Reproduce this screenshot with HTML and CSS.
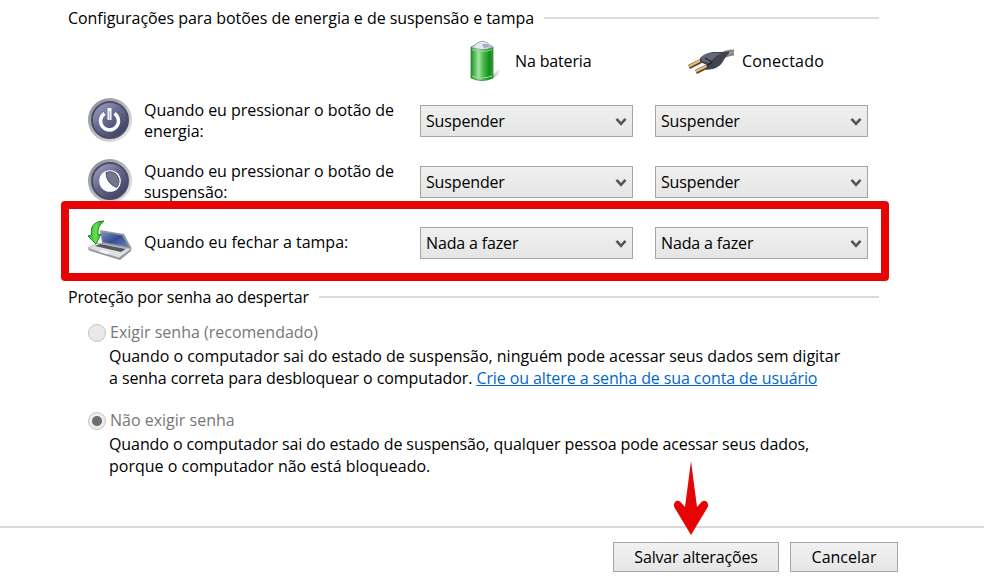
FILE: index.html
```
<!DOCTYPE html>
<html lang="pt-BR">
<head>
  <meta charset="UTF-8">
  <title>Opções de Energia</title>
  <link rel="stylesheet" href="styles.css">
</head>
<body>

  <main>
    <h2 class="titulo"><span class="t-config">Configurações para botões de energia e de suspensão e tampa</span></h2>

    <div class="colunas">
      <div class="coluna bateria">
        <svg width="34" height="44" viewBox="0 0 34 44">
          <defs>
            <linearGradient id="verde">
              <stop offset="0" stop-color="#278c2b"/>
              <stop offset=".2" stop-color="#62c568"/>
              <stop offset=".35" stop-color="#a5e5a6"/>
              <stop offset=".55" stop-color="#4fbb50"/>
              <stop offset=".85" stop-color="#128b18"/>
              <stop offset="1" stop-color="#37a53c"/>
            </linearGradient>
            <linearGradient id="sombra">
              <stop offset="0" stop-color="#999"/>
              <stop offset="1" stop-color="#fff"/>
            </linearGradient>
          </defs>
          <path d="M22 39 L32 29 Q34 35 24 40Z" fill="url(#sombra)"/>
          <path d="M3 8 Q8 6 10 4 Q14 1 19 4 Q21 6 25 8 V39 Q14 44 3 39Z" fill="url(#verde)" stroke="#288b2c" stroke-width=".8"/>
          <path d="M3.5 8 Q8 6 10 3.500 Q14 .5 19 3.500 Q21 6 25 8 Q14 13 3.5 8Z" fill="#e4e8f2" stroke="#8c99a6" stroke-width=".7"/>
          <path d="M14 5 l5 0 4 3 -7 1z" fill="#a6a9c8"/>
          <path d="M4 10.500 Q14 14.500 24 10.500M4 37 Q14 41 24 37" fill="none" stroke="#98df98"/>
        </svg>
        <span class="t-bateria">Na bateria</span>
      </div>
      <div class="coluna tomada">
        <svg width="48" height="26" viewBox="0 0 48 26">
          <path d="M31 8 Q37 3 46 3 M33 10 Q38 7 46 6" fill="none" stroke="#85868b" stroke-width="3"/>
          <path d="M1 19 L15 12 M8 24 L22 17" stroke="#68471f" stroke-width="4.2"/>
          <path d="M1 18.3 L15 11.3 M8 23.3 L22 16.3" stroke="#e4bf83" stroke-width="2.2"/>
          <path d="M12 10 Q17 5 25 4 L34 4 Q39 3 42 4 Q37 9 34 15 Q31 19 25 21 L18 22 L19 17 L12 14Z" fill="#41444f"/>
          <path d="M13 10 Q18 5 25 5 L33 5 L27 9 L21 15 L14 13Z" fill="#656875"/>
          <path d="M17 10 L24 14 L19 18" fill="none" stroke="#242733" stroke-width="1.4"/>
        </svg>
        <span class="t-conectado">Conectado</span>
      </div>
    </div>

    <div class="linhas">
      <div class="linha">
        <svg class="icone" width="46" height="46" viewBox="0 0 46 46">
          <defs>
            <linearGradient id="aro" x2="1" y2="1">
              <stop offset="0" stop-color="#85868c"/>
              <stop offset=".5" stop-color="#b9babd"/>
              <stop offset="1" stop-color="#f0f0f2"/>
            </linearGradient>
            <linearGradient id="botao" x2=".8" y2="1">
              <stop offset="0" stop-color="#a9abc9"/>
              <stop offset=".5" stop-color="#66688e"/>
              <stop offset="1" stop-color="#3c3e60"/>
            </linearGradient>
          </defs>
          <circle cx="23" cy="23" r="22" fill="url(#aro)"/>
          <circle cx="23" cy="23" r="18" fill="url(#botao)" stroke="#4b4d69" stroke-width="2"/>
          <path d="M17.5 16.5 A9 9 0 1 0 27.5 16.5" fill="none" stroke="#fff" stroke-width="3.4"/>
          <path d="M22.5 11 V23" stroke="#fff" stroke-width="4"/>
          <path d="M22.5 14 V23" stroke="#b8bacd" stroke-width="1.5"/>
        </svg>
        <label class="rotulo">Quando eu pressionar o botão de<br>energia:</label>
        <div class="combo"><select><option>Suspender</option></select><svg width="12" height="10" viewBox="0 0 12 10"><path d="M1.5 1.8 L6 6.8 L10.5 1.8"/></svg></div>
        <div class="combo"><select><option>Suspender</option></select><svg width="12" height="10" viewBox="0 0 12 10"><path d="M1.5 1.8 L6 6.8 L10.5 1.8"/></svg></div>
      </div>

      <div class="linha">
        <svg class="icone" width="46" height="46" viewBox="0 0 46 46">
          <circle cx="23" cy="23" r="22" fill="url(#aro)"/>
          <circle cx="23" cy="23" r="18" fill="url(#botao)" stroke="#4b4d69" stroke-width="2"/>
          <circle cx="23" cy="23" r="10.8" fill="#fff"/>
          <path d="M19 14.500 Q28 11.500 31.500 20 Q33 26 29.500 29.500 Q19 25 19 14.500Z" fill="#74768e" stroke="#4c4e67"/>
        </svg>
        <label class="rotulo">Quando eu pressionar o botão de<br>suspensão:</label>
        <div class="combo"><select><option>Suspender</option></select><svg width="12" height="10" viewBox="0 0 12 10"><path d="M1.5 1.8 L6 6.8 L10.5 1.8"/></svg></div>
        <div class="combo"><select><option>Suspender</option></select><svg width="12" height="10" viewBox="0 0 12 10"><path d="M1.5 1.8 L6 6.8 L10.5 1.8"/></svg></div>
      </div>

      <div class="linha destaque">
        <svg class="icone" width="46" height="46" viewBox="0 0 46 46">
          <defs>
            <linearGradient id="tela" x2="1" y2="1">
              <stop offset="0" stop-color="#8393c4"/>
              <stop offset=".5" stop-color="#344c94"/>
              <stop offset="1" stop-color="#6e83bc"/>
            </linearGradient>
            <linearGradient id="seta" x2="1">
              <stop offset="0" stop-color="#2fb52f"/>
              <stop offset=".5" stop-color="#67e04c"/>
              <stop offset="1" stop-color="#24952a"/>
            </linearGradient>
          </defs>
          <path d="M13 11 L37 15 L45 30 L15 25Z" fill="#9497a0"/>
          <path d="M14 12.500 L35 16.500 L42 28 L16 23Z" fill="url(#tela)"/>
          <path d="M11 24 L44 30 L32 39 L1 29Z" fill="#dfe0e3" stroke="#9d9fa5" stroke-width=".7"/>
          <path d="M13 25 L39 30 L34 33 L8 27Z" fill="#55575e"/>
          <path d="M15 31 L23 33 L20 36 L11 33Z" fill="#f6f6f8"/>
          <path d="M1 29.500 L32 39 L44 30 V32 L33 41 L2 31.500Z" fill="#92949b"/>
          <path d="M17 2 Q8 2 5 8 Q4 11 4.5 16 L1 17 L9 25 L14 15 L11 16 Q10 7 17 2Z" fill="url(#seta)" stroke="#168b20" stroke-linejoin="round"/>
        </svg>
        <label class="rotulo t-tampa">Quando eu fechar a tampa:</label>
        <div class="combo"><select><option>Nada a fazer</option></select><svg width="12" height="10" viewBox="0 0 12 10"><path d="M1.5 1.8 L6 6.8 L10.5 1.8"/></svg></div>
        <div class="combo"><select><option>Nada a fazer</option></select><svg width="12" height="10" viewBox="0 0 12 10"><path d="M1.5 1.8 L6 6.8 L10.5 1.8"/></svg></div>
      </div>
    </div>

    <h2 class="titulo senha"><span class="t-protecao">Proteção por senha ao despertar</span></h2>

    <div class="opcao">
      <label class="radio"><input type="radio" name="senha" disabled><span>Exigir senha (recomendado)</span></label>
      <p><span class="t-l1">Quando o computador sai do estado de suspensão, ninguém pode acessar seus dados sem digitar</span><br>
      <span class="t-l2">a senha correta para desbloquear o computador.</span> <a href="#">Crie ou altere a senha de sua conta de usuário</a></p>
    </div>

    <div class="opcao">
      <label class="radio"><input type="radio" name="senha" checked disabled><span>Não exigir senha</span></label>
      <p><span class="t-l3">Quando o computador sai do estado de suspensão, qualquer pessoa pode acessar seus dados,</span><br>
      <span>porque o computador não está bloqueado.</span></p>
    </div>
  </main>

  <footer>
    <button class="salvar" type="button">Salvar alterações</button>
    <button class="cancelar" type="button">Cancelar</button>
    <svg class="indicador" width="36" height="76" viewBox="0 0 36 76">
      <path d="M18 1 L24 47 L28.500 42 Q31.500 39.500 34 42 Q36 44.500 34.500 47.500 L18 75 L1.500 47.500 Q0 44.500 2 42 Q4.500 39.500 7.500 42 L12 47Z"/>
    </svg>
  </footer>

</body>
</html>
```
FILE: styles.css
```
body {
  margin: 0;
  height: 580px;
  display: flex;
  flex-direction: column;
  overflow: hidden;
  background-color: #fff;
  color: #000;
  font-family: "Segoe UI", "Open Sans", sans-serif;
  font-size: 16px;
  line-height: 21.5px;
}
main {
  height: 526px;
  padding: 0 105px 0 68px;
}
.titulo {
  display: flex;
  align-items: center;
  gap: 10px;
  height: 36px;
  margin: 0;
  font-size: 16px;
  font-weight: normal;
  white-space: nowrap;
}
.titulo span, .coluna span {
  padding-top: 2px;
}
.titulo::after {
  content: "";
  flex: 1;
  border-bottom: 2px solid #dcdcdc;
  margin-top: -1px;
}
.titulo.senha {
  margin-top: 6px;
}
.t-config {
  letter-spacing: -0.05px;
}
.t-protecao {
  letter-spacing: -0.16px;
}

/* cabeçalho das colunas */
.colunas {
  display: grid;
  grid-template-columns: 220px 1fr;
  height: 50px;
  padding-left: 400px;
  margin-bottom: 5px;
}
.coluna {
  display: flex;
  align-items: center;
}
.bateria {
  gap: 13px;
  letter-spacing: -0.15px;
}
.tomada {
  gap: 6px;
  letter-spacing: 0.2px;
}

.linhas {
  display: grid;
  gap: 1px;
}
.linha {
  position: relative;
  display: grid;
  grid-template-columns: 57px 276px 235px 212px;
  align-items: center;
  height: 60px;
  padding-left: 19px;
}
.icone {
  margin-top: -3px;
}
.rotulo {
  white-space: nowrap;
  letter-spacing: -0.05px;
}
.t-tampa {
  letter-spacing: 0;
}
.destaque::after {
  content: "";
  position: absolute;
  top: -12px;
  left: -7px;
  width: 812px;
  height: 64px;
  border: 8px solid #e60404;
  border-radius: 4px;
  pointer-events: none;
}
.combo {
  position: relative;
  width: 213px;
  height: 32px;
}
select {
  appearance: none;
  width: 100%;
  height: 32px;
  padding: 2px 5px 0;
  border: 1px solid #a5a5a5;
  border-radius: 0;
  background: linear-gradient(#f0f0f0, #e5e5e5);
  color: #000;
  font: inherit;
  letter-spacing: -0.15px;
}
.combo svg {
  position: absolute;
  right: 6px;
  top: 12px;
  pointer-events: none;
}
.combo path {
  fill: none;
  stroke: #555;
  stroke-width: 2.6;
}

/* opções de senha */
.opcao {
  padding-left: 20px;
  margin-top: 6px;
  height: 82px;
  white-space: nowrap;
}
.radio {
  display: flex;
  align-items: center;
  gap: 4px;
  height: 24px;
  color: #777;
}
.radio input {
  appearance: none;
  box-sizing: border-box;
  width: 18px;
  height: 18px;
  margin: 0;
  border: 1.5px solid #c4c4c4;
  border-radius: 50%;
  background-color: #e9e9e9;
}
.radio input:checked {
  background: radial-gradient(circle, #6e6e6e 4.5px, #eee 5.5px);
}
.opcao p {
  margin: 1px 0 0 21px;
}
.t-l1 {
  letter-spacing: -0.02px;
}
.t-l2 {
  letter-spacing: -0.08px;
}
.t-l3 {
  letter-spacing: -0.09px;
}
a {
  color: #0066cc;
  letter-spacing: -0.1px;
}

footer {
  position: relative;
  display: flex;
  justify-content: flex-end;
  gap: 11px;
  height: 54px;
  box-sizing: border-box;
  padding: 14px 86px 0 0;
  border-top: 2px solid #d9d9d9;
}
button {
  height: 30px;
  padding: 2px 0 0;
  border: 1px solid #a5a5a5;
  background: linear-gradient(#f1f1f1, #e6e6e6);
  color: #000;
  font: inherit;
}
.salvar {
  width: 166px;
  letter-spacing: -0.17px;
}
.cancelar {
  width: 108px;
}
.indicador {
  position: absolute;
  left: 673px;
  top: -68px;
  fill: #e60404;
}
```
